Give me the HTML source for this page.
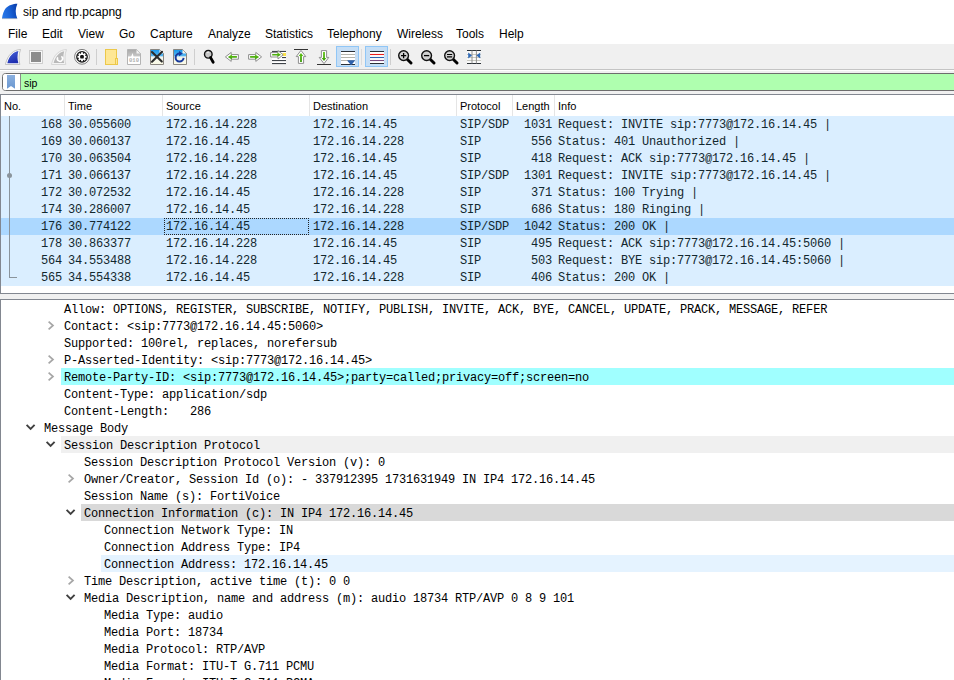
<!DOCTYPE html>
<html lang="en"><head><meta charset="utf-8"><title>sip and rtp.pcapng</title>
<style>
html,body{margin:0;padding:0}
body{width:954px;height:680px;overflow:hidden;background:#fff;position:relative;font-family:"Liberation Sans",sans-serif;color:#000}
#title{position:absolute;left:0;top:0;width:954px;height:24px;background:#fff}
#title .appico{position:absolute;left:0;top:0}
#title .ttl{position:absolute;left:23px;top:5px;font-size:12px;line-height:14px;white-space:pre}
#menu{position:absolute;left:0;top:24px;width:954px;height:20px;background:#fff;font-size:12px}
#menu span{position:absolute;top:3px;line-height:14px;white-space:pre}
#toolbar{position:absolute;left:0;top:44px;width:954px;height:25px;background:#f0f0f0}
#toolbar svg{position:absolute;top:5px}
#toolbar .sep{position:absolute;top:5px;width:1px;height:16px;background:#cfcfcf}
#toolbar .hl{position:absolute;top:2px;height:19px;border:1px solid #90c6f6;background:#c6def5}
#tbline{position:absolute;left:0;top:69px;width:954px;height:25px;background:#f0f0f0;border-top:1px solid #c4c4c4;box-shadow:inset 0 1px 0 #fff}
#filter{position:absolute;left:2px;top:73px;width:960px;height:16px;border:1px solid #6d6d6d;border-radius:3.5px;background:linear-gradient(90deg,#fff 0,#fff 12px,#afffaf 12px);overflow:hidden}
#filter .bm{position:absolute;left:0;top:0;width:17px;height:16px;background:#fff;border-right:1px solid #8a8a8a}
#filter .bm svg{position:absolute;left:4px;top:1px}
#filter .ftxt{position:absolute;left:21px;top:3px;font-size:10.5px;line-height:13px}
#plist{position:absolute;left:0;top:94px;width:960px;height:198px;border:1px solid #828790;border-right:0;background:#fff;box-sizing:content-box;overflow:hidden}
#plist .hdr{position:absolute;left:0;top:0;width:960px;height:21px;background:#fff;font-size:11px}
#plist .hdr span{position:absolute;top:5px;line-height:13px;white-space:pre}
#plist .hdr i{position:absolute;top:0;width:1px;height:21px;background:#e5e5e5}
.row{position:absolute;left:0;width:960px;height:17px;background:#daeeff;font:12px "Liberation Mono",monospace;letter-spacing:-0.2px;color:#12272e}
.row.sel{background:#acd8ff}
.row span{position:absolute;top:2px;line-height:15px;white-space:pre}
.row span.r{text-align:right}
.row .focus{position:absolute;left:163px;top:0;width:143px;height:15px;border:1px dotted #222}
.rel{position:absolute;left:8px;top:21px;width:1px;height:162px;background:#8a949c}
.relb{position:absolute;left:8px;top:182px;width:8px;height:1px;background:#8a949c}
.reldot{position:absolute;left:6px;top:78px;width:5px;height:5px;border-radius:3px;background:#8a949c}
#detail{position:absolute;left:0;top:299px;width:960px;height:400px;border:1px solid #828790;border-right:0;background:#fff;overflow:hidden}
#gap{position:absolute;left:0;top:294px;width:954px;height:5px;background:#f0f0f0}
.trow{position:absolute;left:0;width:960px;height:17px;font:12px "Liberation Mono",monospace;letter-spacing:-0.2px;color:#000}
.trow span{position:absolute;top:3px;line-height:15px;white-space:pre}
.trow .tbg{position:absolute;top:0;right:0;height:17px}
.trow .arr{position:absolute;top:3px}
</style></head>
<body>
<div id="title"><svg class="appico" width="20" height="20" viewBox="0 0 20 20"><defs><linearGradient id="fg" x1="0" y1="0.7" x2="1" y2="0.45"><stop offset="0" stop-color="#2a78e8"/><stop offset="0.5" stop-color="#1a62d6"/><stop offset="1" stop-color="#0a40ae"/></linearGradient></defs><path d="M2 18.6 H17.3" stroke="#9aa4b4" stroke-width="0.8"/><path d="M17.4 3.7 C13 3.8 8.5 5 5.3 8.8 C3.6 11 2.6 14.5 2 18.2 L17.2 18.2 C15.2 13.5 15.2 8.5 17.4 3.7 Z" fill="url(#fg)"/></svg><span class="ttl">sip and rtp.pcapng</span></div>
<div id="menu"><span style="left:8px">File</span><span style="left:42px">Edit</span><span style="left:78px">View</span><span style="left:119px">Go</span><span style="left:150px">Capture</span><span style="left:208px">Analyze</span><span style="left:265px">Statistics</span><span style="left:327px">Telephony</span><span style="left:397px">Wireless</span><span style="left:456px">Tools</span><span style="left:499px">Help</span></div>
<div id="toolbar">
<svg width="0" height="0" style="position:absolute"><defs>
<linearGradient id="gfin" x1="0" y1="0" x2="0.4" y2="1"><stop offset="0" stop-color="#4a66dc"/><stop offset="1" stop-color="#1f2fb0"/></linearGradient>
<linearGradient id="gfile" x1="0" y1="0" x2="0" y2="1"><stop offset="0" stop-color="#1495ea"/><stop offset="0.4" stop-color="#54b4f0"/><stop offset="0.5" stop-color="#f4f6f0"/><stop offset="1" stop-color="#fbfbe6"/></linearGradient>
<linearGradient id="ggray" x1="0" y1="0" x2="0" y2="1"><stop offset="0" stop-color="#a8a8a8"/><stop offset="0.42" stop-color="#c4c4c4"/><stop offset="0.5" stop-color="#ffffff"/><stop offset="1" stop-color="#ffffff"/></linearGradient>
<linearGradient id="ggreen" x1="0" y1="0" x2="0" y2="1"><stop offset="0" stop-color="#62c416"/><stop offset="1" stop-color="#3a9a08"/></linearGradient>
</defs></svg>
<!-- start capture (fin) -->
<svg style="left:5px" width="16" height="16" viewBox="0 0 16 16"><path d="M15.5 0.5 C9 0.8 2.8 5 0.4 15.5 L14.8 15.5 C13.6 10.8 13.7 5.2 15.5 0.5 Z" fill="#fff" stroke="#b4b4b4" stroke-width="0.8"/><path d="M13.4 2 C8.4 3 4.2 6.8 2.3 14.2 L13.4 14.2 C12.2 10.4 12.3 6 13.4 2 Z" fill="url(#gfin)"/></svg>
<!-- stop -->
<svg style="left:28px" width="16" height="16" viewBox="0 0 16 16"><rect x="1.5" y="1.5" width="13" height="13" fill="#f8f8f8" stroke="#cacaca" stroke-width="0.9"/><rect x="3" y="3" width="10" height="10" fill="#8c8c8c"/></svg>
<!-- restart (disabled fin) -->
<svg style="left:51px" width="16" height="16" viewBox="0 0 16 16"><path d="M15.5 0.5 C9 0.8 2.8 5 0.4 15.5 L14.8 15.5 C13.6 10.8 13.7 5.2 15.5 0.5 Z" fill="#f4f4f4" stroke="#d6d6d6" stroke-width="1"/><path d="M13.2 2.2 C8.4 3.2 4.4 7 2.6 14 L13.2 14 C12 10.4 12.1 6 13.2 2.2 Z" fill="#b9b9b9"/><circle cx="9" cy="9.6" r="2.6" fill="none" stroke="#fff" stroke-width="1.6" stroke-dasharray="12 5" transform="rotate(-60 9 9.6)"/></svg>
<!-- options gear -->
<svg style="left:74px" width="16" height="16" viewBox="0 0 16 16"><circle cx="8" cy="7.8" r="7.4" fill="#fff" stroke="#606060" stroke-width="0.8"/><circle cx="8" cy="7.8" r="5.9" fill="#1a1a1a"/><circle cx="8" cy="7.8" r="3.3" fill="#fff"/><g stroke="#fff" stroke-width="1.9"><path d="M8 3.3V12.3"/><path d="M3.5 7.8H12.5"/><path d="M4.8 4.6L11.2 11"/><path d="M11.2 4.6L4.8 11"/></g><rect x="6.2" y="6" width="3.6" height="3.6" rx="1.2" fill="#111"/></svg>
<div class="sep" style="left:96px"></div>
<!-- open folder -->
<svg style="left:103px" width="16" height="16" viewBox="0 0 16 16"><rect x="2.5" y="0.5" width="11" height="15" fill="#fee795" stroke="#ecc84a"/><rect x="12.5" y="9.5" width="2" height="6" fill="#fee795" stroke="#ecc84a"/></svg>
<!-- save (010 file, disabled) -->
<svg style="left:126px" width="16" height="16" viewBox="0 0 16 16"><path d="M1.5 0.5 H10.5 L14.5 4.5 V15.5 H1.5 Z" fill="url(#ggray)" stroke="#b4b4b4"/><path d="M10.5 0.8 V4.5 H14.2 Z" fill="#f2f2f2"/><path d="M5 8 L6.6 4 L7.6 8 Z" fill="#fff"/><text x="8" y="13" font-family="Liberation Mono, monospace" font-size="5.5" font-weight="bold" text-anchor="middle" fill="#b0b0b0">010</text></svg>
<!-- close file -->
<svg style="left:149px" width="16" height="16" viewBox="0 0 16 16"><path d="M1.5 0.5 H10.5 L14.5 4.5 V15.5 H1.5 Z" fill="url(#gfile)" stroke="#8a8680"/><path d="M10.5 0.8 V4.5 H14.2 Z" fill="#f4f4f4"/><path d="M3 3 L12.8 12.6 M13 2.8 L3 12.8" stroke="#2b2b2b" stroke-width="2.1" stroke-linecap="round"/></svg>
<!-- reload file -->
<svg style="left:172px" width="16" height="16" viewBox="0 0 16 16"><path d="M1.5 0.5 H10.5 L14.5 4.5 V15.5 H1.5 Z" fill="url(#gfile)" stroke="#8a8680"/><path d="M10.5 0.8 V4.5 H14.2 Z" fill="#f8f4e8"/><path d="M11.6 8.9 A4 4 0 1 1 7.6 4.6" fill="none" stroke="#173a9c" stroke-width="2"/><path d="M7 1.9 L10.8 4.4 L7 7.2 Z" fill="#173a9c"/></svg>
<div class="sep" style="left:194px"></div>
<!-- find -->
<svg style="left:201px" width="16" height="16" viewBox="0 0 16 16"><circle cx="7.3" cy="5.3" r="3.8" fill="#c8c8c8" stroke="#111" stroke-width="1.4"/><path d="M6 3.4 A2.3 2.3 0 0 1 8.2 3.2" fill="none" stroke="#fff" stroke-width="0.9"/><path d="M9.6 8.6 L12.2 13.3" stroke="#000" stroke-width="2.8" stroke-linecap="round"/></svg>
<!-- back -->
<svg style="left:224px" width="16" height="16" viewBox="0 0 16 16"><path d="M1.4 7.9 L7.2 3.4 V5.6 H14.4 V10.2 H7.2 V12.4 Z" fill="#fff" stroke="#8e8e8e" stroke-width="1" stroke-linejoin="round"/><path d="M3.8 7.9 L7.9 5.4 V7 H12.9 V8.8 H7.9 V10.4 Z" fill="url(#ggreen)"/></svg>
<!-- forward -->
<svg style="left:247px" width="16" height="16" viewBox="0 0 16 16"><path d="M14.6 7.9 L8.8 3.4 V5.6 H1.6 V10.2 H8.8 V12.4 Z" fill="#fff" stroke="#8e8e8e" stroke-width="1" stroke-linejoin="round"/><path d="M12.2 7.9 L8.1 5.4 V7 H3.1 V8.8 H8.1 V10.4 Z" fill="url(#ggreen)"/></svg>
<!-- go to packet -->
<svg style="left:270px" width="16" height="16" viewBox="0 0 16 16"><rect x="2" y="1.5" width="14" height="13.5" fill="#fff"/><rect x="12.5" y="4" width="3.5" height="3" fill="#fbe34a"/><path d="M2 2.4H16M12 8.6H16M2 11.6H16M2 14.6H16" stroke="#2a3036" stroke-width="1"/><path d="M13.2 5.8 L8 1.6 V3.6 H0.6 V8 H8 V10 Z" fill="#fff" stroke="#8e8e8e" stroke-width="1" stroke-linejoin="round"/><path d="M11 5.8 L7.4 3.6 V5 H2.2 V6.6 H7.4 V8 Z" fill="url(#ggreen)"/></svg>
<!-- first packet -->
<svg style="left:293px" width="16" height="16" viewBox="0 0 16 16"><path d="M1 0.5H15" stroke="#333" stroke-width="1"/><path d="M8 1.4 L12.8 7.6 H10.6 V14.4 H5.4 V7.6 H3.2 Z" fill="#fff" stroke="#8e8e8e" stroke-width="1" stroke-linejoin="round"/><path d="M8 3.9 L10.3 7 H8.9 V12.9 H7.1 V7 H5.7 Z" fill="url(#ggreen)"/></svg>
<!-- last packet -->
<svg style="left:316px" width="16" height="16" viewBox="0 0 16 16"><path d="M1 15.5H15" stroke="#333" stroke-width="1"/><path d="M8 14.6 L12.8 8.4 H10.6 V1.6 H5.4 V8.4 H3.2 Z" fill="#fff" stroke="#8e8e8e" stroke-width="1" stroke-linejoin="round"/><path d="M8 12.1 L10.3 9 H8.9 V3.1 H7.1 V9 H5.7 Z" fill="url(#ggreen)"/></svg>
<!-- autoscroll (checked) -->
<div class="hl" style="left:336px;width:21px"></div>
<svg style="left:340px" width="16" height="17" viewBox="0 0 16 17"><rect x="1" y="2" width="14" height="14" fill="#fff"/><path d="M1 2.5H15M1 15.5H15" stroke="#2a3036" stroke-width="1.1"/><path d="M1 5.5H15M1 8.5H15M1 11.5H15" stroke="#b4b4ac" stroke-width="1"/><path d="M7.2 11.3 H15 C14.4 13.2 12.6 13.6 12 15.8 H10.4 C9.8 13.6 7.8 13.2 7.2 11.3 Z" fill="#2f62ad"/></svg>
<div class="sep" style="left:361px;background:#dcdcdc"></div>
<!-- colorize (checked) -->
<div class="hl" style="left:365px;width:21px"></div>
<svg style="left:369px" width="16" height="16" viewBox="0 0 16 16"><rect x="1" y="2" width="14" height="13" fill="#fff"/><path d="M1 2.5H15M1 14.5H15" stroke="#2a3036" stroke-width="1.1"/><path d="M1 5.5H15" stroke="#ec1c1c" stroke-width="1.1"/><path d="M1 8.5H15" stroke="#2f62ad" stroke-width="1.1"/><path d="M1 11.5H15" stroke="#7a4a80" stroke-width="1.1"/></svg>
<div class="sep" style="left:390px"></div>
<!-- zoom in -->
<svg style="left:397px" width="16" height="16" viewBox="0 0 16 16"><path d="M10.2 10.2 L14 14" stroke="#000" stroke-width="2.9" stroke-linecap="round"/><circle cx="6.6" cy="6.6" r="4.9" fill="#d2d2d2" stroke="#111" stroke-width="1.4"/><path d="M4 6.6H9.2M6.6 4V9.2" stroke="#000" stroke-width="1.3"/></svg>
<!-- zoom out -->
<svg style="left:420px" width="16" height="16" viewBox="0 0 16 16"><path d="M10.2 10.2 L14 14" stroke="#000" stroke-width="2.9" stroke-linecap="round"/><circle cx="6.6" cy="6.6" r="4.9" fill="#d2d2d2" stroke="#111" stroke-width="1.4"/><path d="M4 6.6H9.2" stroke="#000" stroke-width="1.3"/></svg>
<!-- zoom reset -->
<svg style="left:443px" width="16" height="16" viewBox="0 0 16 16"><path d="M10.2 10.2 L14 14" stroke="#000" stroke-width="2.9" stroke-linecap="round"/><circle cx="6.6" cy="6.6" r="4.9" fill="#d2d2d2" stroke="#111" stroke-width="1.4"/><path d="M4 5.5H9.2M4 7.8H9.2" stroke="#000" stroke-width="1.2"/></svg>
<!-- resize columns -->
<svg style="left:466px" width="16" height="16" viewBox="0 0 16 16"><rect x="1" y="1.5" width="14" height="13" fill="#fafafa"/><path d="M1 5.5H15M1 8.5H15M1 11.5H15" stroke="#c8c8c0" stroke-width="1"/><path d="M1 1.5H15M1 14.5H15" stroke="#2a3036" stroke-width="1"/><path d="M6 1.5V14.5M10.4 1.5V14.5" stroke="#909090" stroke-width="1"/><path d="M2.2 3.4 L6 6.4 L2.2 9.4 Z M14.2 3.4 L10.4 6.4 L14.2 9.4 Z" fill="#2f6ab8"/></svg>
</div>
<div id="tbline"></div>
<div id="filter"><div class="bm"><svg width="8" height="14" viewBox="0 0 8 14"><defs><linearGradient id="bg1" x1="0" y1="0" x2="0" y2="1"><stop offset="0" stop-color="#8bb0df"/><stop offset="1" stop-color="#6a97d0"/></linearGradient></defs><path d="M0 0 H8 V13.8 L4 11 L0 13.8 Z" fill="url(#bg1)"/></svg></div><div class="ftxt">sip</div></div>
<div id="plist">
<div class="hdr"><span style="left:3px">No.</span><i style="left:63px"></i><span style="left:67px">Time</span><i style="left:161px"></i><span style="left:165px">Source</span><i style="left:308px"></i><span style="left:312px">Destination</span><i style="left:455px"></i><span style="left:459px">Protocol</span><i style="left:511px"></i><span style="left:515px">Length</span><i style="left:553px"></i><span style="left:557px">Info</span></div>
<div class="row" style="top:21px"><span class="r" style="left:0;width:61px">168</span><span style="left:67px">30.055600</span><span style="left:165px">172.16.14.228</span><span style="left:312px">172.16.14.45</span><span style="left:459px">SIP/SDP</span><span class="r" style="left:513px;width:38px">1031</span><span style="left:557px">Request: INVITE sip:7773@172.16.14.45 |</span></div>
<div class="row" style="top:38px"><span class="r" style="left:0;width:61px">169</span><span style="left:67px">30.060137</span><span style="left:165px">172.16.14.45</span><span style="left:312px">172.16.14.228</span><span style="left:459px">SIP</span><span class="r" style="left:513px;width:38px">556</span><span style="left:557px">Status: 401 Unauthorized |</span></div>
<div class="row" style="top:55px"><span class="r" style="left:0;width:61px">170</span><span style="left:67px">30.063504</span><span style="left:165px">172.16.14.228</span><span style="left:312px">172.16.14.45</span><span style="left:459px">SIP</span><span class="r" style="left:513px;width:38px">418</span><span style="left:557px">Request: ACK sip:7773@172.16.14.45 |</span></div>
<div class="row" style="top:72px"><span class="r" style="left:0;width:61px">171</span><span style="left:67px">30.066137</span><span style="left:165px">172.16.14.228</span><span style="left:312px">172.16.14.45</span><span style="left:459px">SIP/SDP</span><span class="r" style="left:513px;width:38px">1301</span><span style="left:557px">Request: INVITE sip:7773@172.16.14.45 |</span></div>
<div class="row" style="top:89px"><span class="r" style="left:0;width:61px">172</span><span style="left:67px">30.072532</span><span style="left:165px">172.16.14.45</span><span style="left:312px">172.16.14.228</span><span style="left:459px">SIP</span><span class="r" style="left:513px;width:38px">371</span><span style="left:557px">Status: 100 Trying |</span></div>
<div class="row" style="top:106px"><span class="r" style="left:0;width:61px">174</span><span style="left:67px">30.286007</span><span style="left:165px">172.16.14.45</span><span style="left:312px">172.16.14.228</span><span style="left:459px">SIP</span><span class="r" style="left:513px;width:38px">686</span><span style="left:557px">Status: 180 Ringing |</span></div>
<div class="row sel" style="top:123px"><span class="r" style="left:0;width:61px">176</span><span style="left:67px">30.774122</span><span style="left:165px">172.16.14.45</span><span style="left:312px">172.16.14.228</span><span style="left:459px">SIP/SDP</span><span class="r" style="left:513px;width:38px">1042</span><span style="left:557px">Status: 200 OK |</span><b class="focus"></b></div>
<div class="row" style="top:140px"><span class="r" style="left:0;width:61px">178</span><span style="left:67px">30.863377</span><span style="left:165px">172.16.14.228</span><span style="left:312px">172.16.14.45</span><span style="left:459px">SIP</span><span class="r" style="left:513px;width:38px">495</span><span style="left:557px">Request: ACK sip:7773@172.16.14.45:5060 |</span></div>
<div class="row" style="top:157px"><span class="r" style="left:0;width:61px">564</span><span style="left:67px">34.553488</span><span style="left:165px">172.16.14.228</span><span style="left:312px">172.16.14.45</span><span style="left:459px">SIP</span><span class="r" style="left:513px;width:38px">503</span><span style="left:557px">Request: BYE sip:7773@172.16.14.45:5060 |</span></div>
<div class="row" style="top:174px"><span class="r" style="left:0;width:61px">565</span><span style="left:67px">34.554338</span><span style="left:165px">172.16.14.45</span><span style="left:312px">172.16.14.228</span><span style="left:459px">SIP</span><span class="r" style="left:513px;width:38px">406</span><span style="left:557px">Status: 200 OK |</span></div>
<div class="rel"></div><div class="relb"></div><div class="reldot"></div>
</div>
<div id="gap"></div>
<div id="detail">
<div class="trow" style="top:0px"><span style="left:63px">Allow: OPTIONS, REGISTER, SUBSCRIBE, NOTIFY, PUBLISH, INVITE, ACK, BYE, CANCEL, UPDATE, PRACK, MESSAGE, REFER</span></div>
<div class="trow" style="top:17px"><svg class="arr" style="left:46px" width="8" height="11" viewBox="0 0 8 11"><path d="M1.6 1.6 L6 5.5 L1.6 9.4" fill="none" stroke="#a6a6a6" stroke-width="1.7"/></svg><span style="left:63px">Contact: &lt;sip:7773@172.16.14.45:5060&gt;</span></div>
<div class="trow" style="top:34px"><span style="left:63px">Supported: 100rel, replaces, norefersub</span></div>
<div class="trow" style="top:51px"><svg class="arr" style="left:46px" width="8" height="11" viewBox="0 0 8 11"><path d="M1.6 1.6 L6 5.5 L1.6 9.4" fill="none" stroke="#a6a6a6" stroke-width="1.7"/></svg><span style="left:63px">P-Asserted-Identity: &lt;sip:7773@172.16.14.45&gt;</span></div>
<div class="trow" style="top:68px"><div class="tbg" style="left:60px;background:#a0ffff"></div><svg class="arr" style="left:46px" width="8" height="11" viewBox="0 0 8 11"><path d="M1.6 1.6 L6 5.5 L1.6 9.4" fill="none" stroke="#a6a6a6" stroke-width="1.7"/></svg><span style="left:63px">Remote-Party-ID: &lt;sip:7773@172.16.14.45&gt;;party=called;privacy=off;screen=no</span></div>
<div class="trow" style="top:85px"><span style="left:63px">Content-Type: application/sdp</span></div>
<div class="trow" style="top:102px"><span style="left:63px">Content-Length:   286</span></div>
<div class="trow" style="top:119px"><svg class="arr" style="left:24px" width="11" height="10" viewBox="0 0 11 10"><path d="M1.6 2.8 L5.6 6.8 L9.6 2.8" fill="none" stroke="#404040" stroke-width="1.9"/></svg><span style="left:43px">Message Body</span></div>
<div class="trow" style="top:136px"><div class="tbg" style="left:60px;background:#f0f0f0"></div><svg class="arr" style="left:44px" width="11" height="10" viewBox="0 0 11 10"><path d="M1.6 2.8 L5.6 6.8 L9.6 2.8" fill="none" stroke="#404040" stroke-width="1.9"/></svg><span style="left:63px">Session Description Protocol</span></div>
<div class="trow" style="top:153px"><span style="left:83px">Session Description Protocol Version (v): 0</span></div>
<div class="trow" style="top:170px"><svg class="arr" style="left:66px" width="8" height="11" viewBox="0 0 8 11"><path d="M1.6 1.6 L6 5.5 L1.6 9.4" fill="none" stroke="#a6a6a6" stroke-width="1.7"/></svg><span style="left:83px">Owner/Creator, Session Id (o): - 337912395 1731631949 IN IP4 172.16.14.45</span></div>
<div class="trow" style="top:187px"><span style="left:83px">Session Name (s): FortiVoice</span></div>
<div class="trow" style="top:204px"><div class="tbg" style="left:80px;background:#d9d9d9"></div><svg class="arr" style="left:64px" width="11" height="10" viewBox="0 0 11 10"><path d="M1.6 2.8 L5.6 6.8 L9.6 2.8" fill="none" stroke="#404040" stroke-width="1.9"/></svg><span style="left:83px">Connection Information (c): IN IP4 172.16.14.45</span></div>
<div class="trow" style="top:221px"><span style="left:103px">Connection Network Type: IN</span></div>
<div class="trow" style="top:238px"><span style="left:103px">Connection Address Type: IP4</span></div>
<div class="trow" style="top:255px"><div class="tbg" style="left:100px;background:#e5f3ff"></div><span style="left:103px">Connection Address: 172.16.14.45</span></div>
<div class="trow" style="top:272px"><svg class="arr" style="left:66px" width="8" height="11" viewBox="0 0 8 11"><path d="M1.6 1.6 L6 5.5 L1.6 9.4" fill="none" stroke="#a6a6a6" stroke-width="1.7"/></svg><span style="left:83px">Time Description, active time (t): 0 0</span></div>
<div class="trow" style="top:289px"><svg class="arr" style="left:64px" width="11" height="10" viewBox="0 0 11 10"><path d="M1.6 2.8 L5.6 6.8 L9.6 2.8" fill="none" stroke="#404040" stroke-width="1.9"/></svg><span style="left:83px">Media Description, name and address (m): audio 18734 RTP/AVP 0 8 9 101</span></div>
<div class="trow" style="top:306px"><span style="left:103px">Media Type: audio</span></div>
<div class="trow" style="top:323px"><span style="left:103px">Media Port: 18734</span></div>
<div class="trow" style="top:340px"><span style="left:103px">Media Protocol: RTP/AVP</span></div>
<div class="trow" style="top:357px"><span style="left:103px">Media Format: ITU-T G.711 PCMU</span></div>
<div class="trow" style="top:374px"><span style="left:103px">Media Format: ITU-T G.711 PCMA</span></div>
</div>
</body></html>
